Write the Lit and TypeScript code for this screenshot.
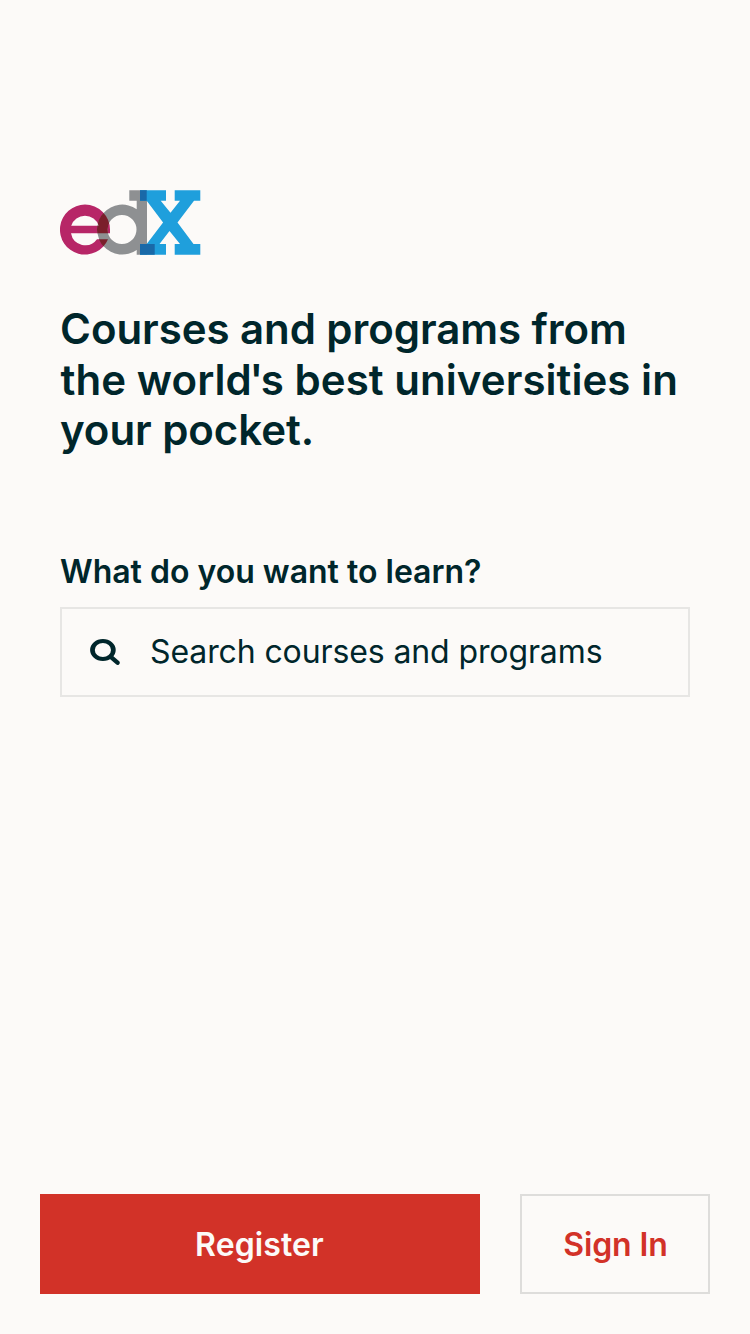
import { LitElement, html, css } from "lit";
import { customElement } from "lit/decorators.js";

@customElement("edx-logo")
class EdxLogo extends LitElement {
  static styles = css`
    :host { display: block; width: 141px; height: 65px; }
    .mark { display: block; }
  `;
  render() {
    return html`<svg class="mark" width="141" height="65" viewBox="0 0 141 65" role="img" aria-label="edX">
      <defs>
        <clipPath id="e-shape">
          <path clip-rule="evenodd" d="M25 14.6a25 25 0 0 1 25 25V43.3H11A14.5 14.5 0 0 0 37 49.3H48A25 25 0 1 1 25 14.6ZM11.2 35.7H38.8A14.5 14.5 0 0 0 11.2 35.7Z"/>
        </clipPath>
      </defs>
      <path fill="#b72667" fill-rule="evenodd" d="M25 14.6a25 25 0 0 1 25 25V43.3H11A14.5 14.5 0 0 0 37 49.3H48A25 25 0 1 1 25 14.6ZM11.2 35.7H38.8A14.5 14.5 0 0 0 11.2 35.7Z"/>
      <path fill="#8e9092" fill-rule="evenodd" d="M69.3 .2H87V64.8H76.7V60A25 25 0 1 1 76.7 19.2V10.7H69.3ZM62 25.1a14.5 14.5 0 1 0 0 29a14.5 14.5 0 0 0 0-29Z"/>
      <path fill="#7a1f2b" clip-path="url(#e-shape)" fill-rule="evenodd" d="M62 14.6a25 25 0 1 0 0 50a25 25 0 0 0 0-50ZM62 25.1a14.5 14.5 0 1 0 0 29a14.5 14.5 0 0 0 0-29Z"/>
      <path fill="#1f9fdc" d="M80 .2H106V10.7H100.7L110.5 22.7L120 10.7H114.7V.2H140.3V10.7H134L117.5 32.5L133.5 54H140.3V64.8H114.7V54H120L109.5 41L99.5 54H106V64.8H80V54H86.7L103.1 32.5L86.7 10.7H80Z"/>
      <path fill="#1969a8" d="M80 .2H86.7V10.7H80ZM80 54H94.7V64.8H80Z"/>
    </svg>`;
  }
}

@customElement("app-root")
class AppRoot extends LitElement {
  static styles = css`
    :host {
      display: flex; flex-direction: column; box-sizing: border-box;
      width: 100%; height: 100vh; padding: 190px 40px 40px;
      background: #fcfaf8; color: #00262b;
      font-family: Inter, sans-serif;
    }
    .intro { padding: 0 20px; }
    .title { margin: 49.2px 0 0; font-size: 42px; line-height: 50.5px; font-weight: 600; letter-spacing: -0.06px; white-space: nowrap; }
    .wide { letter-spacing: 0.05px; padding-left: 0.6px; }
    .apostrophe { margin: 0 -2.4px; }
    .label { display: block; margin: 96.7px 0 0; font-size: 32px; line-height: 40px; font-weight: 600; white-space: nowrap; }
    .search {
      display: flex; align-items: center; gap: 30px; box-sizing: border-box;
      height: 90px; margin-top: 15px; padding: 0 28px; border: 2px solid #e7e6e4;
      font-size: 32px; letter-spacing: -0.11px; line-height: 40px; white-space: nowrap;
    }
    .glyph { flex: none; }
    .actions { display: flex; gap: 40px; margin-top: auto; height: 100px; }
    .button {
      box-sizing: border-box; font: 600 32px/40px Inter, sans-serif; margin: 0; padding: 2px 0 0;
      border: 0; border-radius: 0; height: 100px;
    }
    .primary { flex: 1; background: #d23228; color: #fcfaf8; letter-spacing: 0.1px; padding-right: 1px; }
    .secondary { width: 190px; background: transparent; color: #d23228; border: 2px solid #dedddb; letter-spacing: -0.1px; padding-left: 1px; }
  `;
  render() {
    return html`
      <main class="intro">
        <edx-logo></edx-logo>
        <h1 class="title">Courses and programs from<br><span class="wide">the world<span class="apostrophe">'</span>s best universities in</span><br>your pocket.</h1>
        <label class="label">What do you want to learn?</label>
        <div class="search">
          <svg class="glyph" width="30" height="28" viewBox="0 0 30 28">
            <path fill="#00262b" fill-rule="evenodd" d="M12.9 1a12.8 11 0 1 0 0 22a12.8 11 0 0 0 0-22ZM12.9 5a8.1 7 0 1 0 0 14a8.1 7 0 0 0 0-14Z"/>
            <path fill="none" stroke="#00262b" stroke-width="4.4" stroke-linecap="round" d="M20.8 18.8L27.5 24.7"/>
          </svg>
          <span>Search courses and programs</span>
        </div>
      </main>
      <div class="actions">
        <button class="button primary">Register</button>
        <button class="button secondary">Sign In</button>
      </div>`;
  }
}
